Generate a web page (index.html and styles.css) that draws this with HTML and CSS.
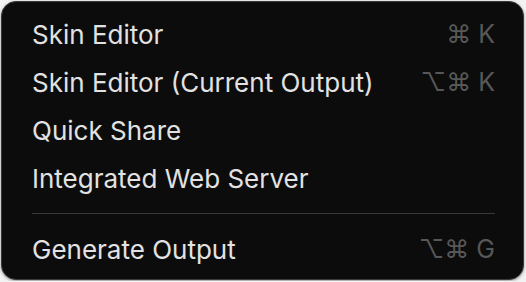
FILE: index.html
```html
<!DOCTYPE html>
<html lang="en">
<head>
    <meta charset="UTF-8">
    <title>Menu</title>
    <link rel="stylesheet" href="styles.css">
</head>
<body>

<div class="menu">
    <div class="item">
        <span class="label">Skin Editor</span>
        <span class="keys">&#8984; K</span>
    </div>
    <div class="item">
        <span class="label">Skin Editor (Current Output)</span>
        <span class="keys">&#8997;&#8984; K</span>
    </div>
    <div class="item">
        <span class="label">Quick Share</span>
    </div>
    <div class="item">
        <span class="label">Integrated Web Server</span>
    </div>
    <div class="separator"></div>
    <div class="item">
        <span class="label">Generate Output</span>
        <span class="keys">&#8997;&#8984; G</span>
    </div>
</div>

</body>
</html>
```

FILE: styles.css
```css
* {
    margin: 0;
    padding: 0;
    box-sizing: border-box;
}
body {
    background: #f2f2f2;
    font-family: 'Inter', 'Liberation Sans', sans-serif;
    padding: 1px;
}
.menu {
    width: 523px;
    height: 279px;
    background: #0c0c0c;
    border: 1px solid #3a3a3a;
    border-radius: 15px;
    padding: 8px 28px 0 30px;
    box-shadow: 0 1px 3px rgba(0, 0, 0, 0.4);
}
.item {
    display: flex;
    justify-content: space-between;
    align-items: center;
    height: 48px;
    font-size: 26px;
}
.label {
    color: #e2e2e2;
}
.keys {
    color: #575757;
    font-size: 25px;
}
.separator {
    height: 1px;
    background: #393939;
    margin: 11px 0 11px;
}
```
